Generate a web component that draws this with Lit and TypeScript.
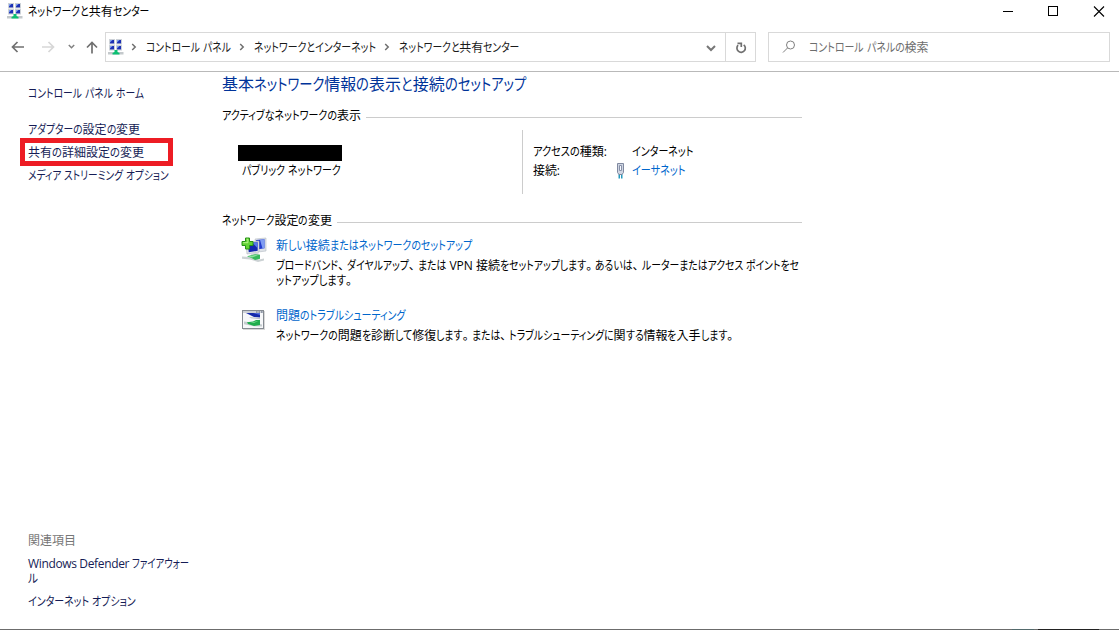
import { LitElement, html, svg, css } from "lit";
import { customElement, property } from "lit/decorators.js";

/** One line of UI text: kanji and Latin keep their widths, kana is condensed to the line's measure. */
@customElement("ui-line")
class UiLine extends LitElement {
  @property() text = "";
  @property({ type: Number }) measure = 0;

  static styles = css`
    :host { display: block; white-space: pre; line-height: 16px; height: 16px; flex: none; }
    .line { display: flex; width: max-content; padding-top: 1px; }
    .run { display: block; flex: none; transform-origin: 0 50%; }
    .kana, .stop { font-feature-settings: "palt"; }
    .stop { padding-right: 3px; }
    .latin { letter-spacing: -0.35px; }
  `;

  private kind(run: string) {
    if (/[\u3001\u3002]/.test(run)) return "stop";
    if (/[\u3003-\u30ff]/.test(run)) return "kana";
    return /[a-z]/.test(run) ? "latin" : "fixed";
  }

  render() {
    const runs = this.text.match(/[\u3001\u3002]|[\u3003-\u30ff]+|[^\u3001-\u30ff]+/g) ?? [];
    return html`<span class="line">${runs.map((r) => html`<span class="run ${this.kind(r)}">${r}</span>`)}</span>`;
  }

  firstUpdated() {
    if (!this.measure) return;
    const all = [...this.renderRoot.querySelectorAll<HTMLElement>(".run")];
    const w = new Map(all.map((e) => [e, e.getBoundingClientRect().width]));
    let kana = all.filter((e) => e.classList.contains("kana"));
    if (!kana.length) kana = all;
    const sum = (l: HTMLElement[]) => l.reduce((a, e) => a + w.get(e)!, 0);
    const k = sum(kana);
    const f = (this.measure - (sum(all) - k)) / k;
    for (const e of kana) {
      e.style.transform = `scaleX(${f})`;
      e.style.marginRight = `${w.get(e)! * (f - 1)}px`;
    }
  }
}

const t = (text: string, measure: number, cls = "") =>
  html`<ui-line class=${cls} .text=${text} .measure=${measure}></ui-line>`;

const monitor = (x: number, y: number) => svg`
  <rect x=${x} y=${y} width="6" height="5.5" fill="#cdd2d8"/>
  <rect x=${x + 1} y=${y + 1} width="4" height="3.4" fill="#1c2fb4"/>
  <path d="M${x + 1} ${y + 1}h2.500l-2.500 2.500z" fill="#7fa0f0"/>`;

const networkIcon = html`<svg class="net" width="16" height="16" viewBox="0 0 16 16">
  ${monitor(1, 0)}${monitor(8, 0)}${monitor(1, 6)}${monitor(8, 6)}
  <rect x="0" y="13" width="15.5" height="2.5" fill="#c4c9cc"/>
  <path d="M6.5 11h3v2l2 1v1.500h-7v-1.500l2-1z" fill="#0bbf72"/>
</svg>`;

const crumb = html`<svg class="crumb" width="6" height="8" viewBox="0 0 6 8">
  <path d="M1.2 1l3 3-3 3" fill="none" stroke="#6f6f6f" stroke-width="1.5"/></svg>`;

const setupIcon = html`<svg class="task-icon" width="26" height="26" viewBox="0 0 26 26">
  <path d="M14 2l11-1v13l-8 1z" fill="#dfe3e8" stroke="#b4bac2" stroke-width=".6"/>
  <path d="M15 3l8.500-.8v9l-6 1z" fill="#233ccc"/>
  <path d="M19 2.700l4.500-.5v9l-2 .3z" fill="#7f9cf2"/>
  <path d="M5 5l13-1v11l-12 2z" fill="#e4e8ec" stroke="#a7adb6" stroke-width=".6"/>
  <path d="M7 6l9.700-.8v8.600l-9 1.500z" fill="#1428b0"/>
  <path d="M11 5.600l5.700-.4v6z" fill="#5979e8"/>
  <path d="M9 16.500l7-1 3 2-8 1.200z" fill="#d4d8dc"/>
  <path d="M1 19.500l7 .4 10 2.600 5-1v2l-6 1.500-8-2.600-8-.7z" fill="#ccd2d4"/>
  <path d="M6 19.300l8-2 5 .5v4l-5 1.300-3-1.800z" fill="#36b85c"/>
  <path d="M7 19.400l7-1.400 3 .3-6 2.200z" fill="#8de29b"/>
  <path d="M4.500 1h4v3.500h3.500v4h-3.500v3.500h-4v-3.500h-3.500v-4h3.500z" fill="#62d334" stroke="#269216"/>
  <path d="M5.600 2.200h1.300v3.500h-4.700" fill="none" stroke="#baf58e"/>
</svg>`;

const troubleIcon = html`<svg class="task-icon" width="26" height="26" viewBox="0 0 26 26">
  <rect x="2" y="6" width="22" height="19" fill="#d8d8d8"/>
  <rect x="1.500" y="5.500" width="21" height="18" fill="#f7f8fa" stroke="#858b92"/>
  <rect x="2" y="6" width="20" height="2" fill="#cdd1d7"/>
  <path d="M15 7h1.500M17.500 7h1.500M20 7h1.500" stroke="#566078"/>
  <path d="M5 8h14v4.500l-6-.5z" fill="#1529aa"/><path d="M12 8h7v2z" fill="#526ee0"/>
  <path d="M8 12l11 1v1.200l-9-1z" fill="#b9bec5"/>
  <path d="M3 16.500l8 1 10 2v2l-8-.2-10-2z" fill="#c5cccf"/>
  <path d="M6 17.300l6-.7 3-1.600h4v5l-6 1-6-2z" fill="#20ad4e"/>
  <path d="M9 17.500l4-.4 3-1.200 1 .2-4 2z" fill="#74d98d"/>
</svg>`;

@customElement("app-root")
class AppRoot extends LitElement {
  static styles = css`
    :host { display: flex; flex-direction: column; box-sizing: border-box; width: 1119px; height: 630px; overflow: hidden;
      background: #fff; color: #000; font: 12px "Open Sans", "Noto Sans CJK JP", sans-serif; }
    svg { display: block; flex: none; }
    .title { display: flex; height: 32px; box-sizing: border-box; padding: 3px 14px 0 7px; }
    .title ui-line { margin-left: 5px; }
    .controls { display: flex; gap: 34px; margin-left: auto; padding-top: 3px; }
    .nav { display: flex; height: 30px; padding-right: 9px; }
    .arrows { width: 105px; }
    .address { display: flex; align-items: center; box-sizing: border-box; width: 651px; border: 1px solid #d9d9d9; padding-left: 2px; color: #1a1a1a; }
    .address .net { margin-right: 6.5px; }
    .address ui-line { margin: 0 8px 0 9px; }
    .tools { display: flex; margin-left: auto; height: 28px; }
    .refresh { border-left: 1px solid #d9d9d9; }
    .search { display: flex; align-items: center; box-sizing: border-box; flex: 1; margin-left: 12px; border: 1px solid #d9d9d9; padding-left: 13px; color: #6d6d6d; }
    .search ui-line { margin-left: 13px; }
    .rule { height: 1px; margin-top: 9px; background: #b9b9b9; flex: none; }
    .body { display: flex; flex: 1; }
    .side { display: flex; flex-direction: column; box-sizing: border-box; width: 222px; padding: 13px 0 20px 28px; color: #151c55; }
    .links { display: grid; gap: 7px; margin-top: 20px; }
    .marked { position: relative; }
    .marked::after { content: ""; position: absolute; left: -8px; top: -6px; width: 143px; height: 18px; border: 5px solid #ed1c24; }
    .related { margin-top: auto; }
    .muted { color: #777; margin-bottom: 7px; }
    .tight { margin-top: -1px; margin-bottom: 7px; }
    .main { width: 580px; padding-top: 3px; }
    .heading { font-size: 16px; color: #003399; }
    .section { display: flex; gap: 5px; }
    .section.first { margin-top: 16px; }
    .section.second { margin-top: 18px; }
    .bar { flex: 1; height: 1px; margin-top: 10px; background: #ccc; }
    .active { display: flex; height: 64px; margin-top: 7px; }
    .name { box-sizing: border-box; width: 300px; padding: 15px 0 0 16px; }
    .redacted { width: 104px; height: 16px; background: #000; }
    .name ui-line { margin: 1px 0 0 4px; }
    .facts { display: grid; grid-template-columns: 84px 15px auto; grid-template-rows: 16px 16px; row-gap: 3px; align-content: start; border-left: 1px solid #ccc; padding: 13px 0 0 10px; }
    .plug { margin-top: 1px; margin-left: -1px; }
    .value { grid-column: 3; }
    .link { color: #0066cc; }
    .task { display: flex; padding-left: 19px; gap: 9px; }
    .t1 { margin-top: 9px; }
    .t2 { margin-top: 19px; }
    .t2 .task-icon { margin-top: -2px; }
    .task .link { margin-bottom: 4px; }
    .t1 .wrap { margin-top: -1px; }
    .foot { display: flex; height: 1px; background: #6c6c6c; flex: none; }
    .teal { width: 22px; margin-left: 1012px; background: #536a6c; }
    .dark { width: 61px; margin-left: 4px; background: #222; }
  `;

  render() {
    return html`
      <header class="title">
        ${networkIcon}${t("ネットワークと共有センター", 121)}
        <div class="controls">
          <svg width="11" height="11"><path d="M0 5.500h10" stroke="#000"/></svg>
          <svg width="11" height="11"><rect x=".5" y=".5" width="9" height="9" fill="none" stroke="#000"/></svg>
          <svg width="12" height="11"><path d="M1 .5l10 10M11 .5l-10 10" stroke="#000" stroke-width="1.100"/></svg>
        </div>
      </header>
      <nav class="nav">
        <svg class="arrows" width="105" height="30" viewBox="0 0 105 30" fill="none" stroke-width="1.700">
          <path d="M24 15H13M17.500 10l-5 5 5 5" stroke="#707070"/>
          <path d="M42 15h11M48.500 10l5 5-5 5" stroke="#d7d7d7"/>
          <path d="M68.800 13l2.700 2.700 2.700-2.700" stroke="#808080" stroke-width="1.500"/>
          <path d="M92 21.500V11M87 15.500l5-5 5 5" stroke="#707070"/>
        </svg>
        <div class="address">
          ${networkIcon}${crumb}${t("コントロール パネル", 85)}
          ${crumb}${t("ネットワークとインターネット", 122)}
          ${crumb}${t("ネットワークと共有センター", 121)}
          <div class="tools">
            <svg width="30" height="28"><path d="M12 13l4 4 4-4" fill="none" stroke="#777" stroke-width="2"/></svg>
            <svg class="refresh" width="29" height="28" fill="none" stroke="#707070" stroke-width="1.700">
              <path d="M17.700 11.800a4.200 4.200 0 1 1-5.600.4M11.500 10.300h3.800v3.700"/></svg>
          </div>
        </div>
        <div class="search">
          <svg width="14" height="14" fill="none" stroke="#808080"><circle cx="8.500" cy="5" r="4"/><path d="M5.600 7.900L1 12.500"/></svg>
          ${t("コントロール パネルの検索", 119.5)}
        </div>
      </nav>
      <div class="rule"></div>
      <div class="body">
        <aside class="side">
          ${t("コントロール パネル ホーム", 116)}
          <div class="links">
            ${t("アダプターの設定の変更", 112)}
            ${t("共有の詳細設定の変更", 116, "marked")}
            ${t("メディア ストリーミング オプション", 141)}
          </div>
          <div class="related">
            ${t("関連項目", 48, "muted")}
            ${t("Windows Defender ファイアウォー", 161)}
            ${t("ル", 10, "tight")}
            ${t("インターネット オプション", 108)}
          </div>
        </aside>
        <main class="main">
          ${t("基本ネットワーク情報の表示と接続のセットアップ", 304, "heading")}
          <div class="section first">${t("アクティブなネットワークの表示", 139)}<div class="bar"></div></div>
          <div class="active">
            <div class="name"><div class="redacted"></div>${t("パブリック ネットワーク", 99)}</div>
            <div class="facts">
              ${t("アクセスの種類:", 74)}${t("インターネット", 61.5, "value")}
              ${t("接続:", 27)}
              <svg class="plug" width="9" height="16" viewBox="0 0 9 16"><path d="M2.500 11h1.500v4.500h-1.500zM5 11h1.500v4.500h-1.500z" fill="#2499bd"/>
                <path d="M1.500.5h6v9l-1.500 2h-3l-1.500-2z" fill="#cfd5e2" stroke="#8089a0"/><path d="M3.500 2.500h2v5h-2z" fill="#f7f9ff" stroke="#8790a7"/></svg>
              ${t("イーサネット", 53.5, "link")}
            </div>
          </div>
          <div class="section second">${t("ネットワーク設定の変更", 110)}<div class="bar"></div></div>
          <div class="task t1">${setupIcon}
            <div>${t("新しい接続またはネットワークのセットアップ", 196, "link")}
              ${t("ブロードバンド、ダイヤルアップ、または VPN 接続をセットアップします。あるいは、ルーターまたはアクセス ポイントをセ", 523)}
              ${t("ットアップします。", 79, "wrap")}</div>
          </div>
          <div class="task t2">${troubleIcon}
            <div>${t("問題のトラブルシューティング", 129.5, "link")}
              ${t("ネットワークの問題を診断して修復します。または、トラブルシューティングに関する情報を入手します。", 460)}</div>
          </div>
        </main>
      </div>
      <div class="foot"><div class="teal"></div><div class="dark"></div></div>
    `;
  }
}
